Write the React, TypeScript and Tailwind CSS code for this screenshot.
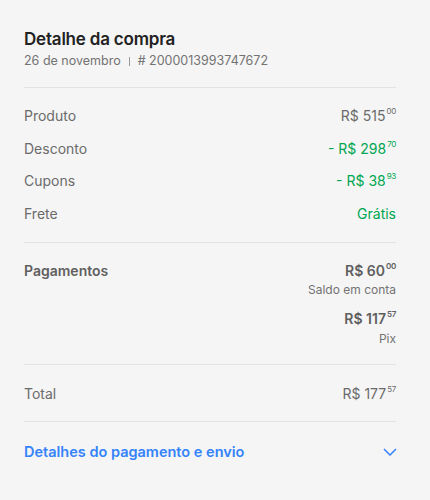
import React from 'react';

type Row = { label: string; value: React.ReactNode; green?: boolean };

const Price = ({ int, cents, prefix = '' }: { int: string; cents: string; prefix?: string }) => (
  <span className="whitespace-nowrap">
    {prefix}R$ {int}
    <sup className="relative top-[-1px] ml-px align-super text-[8px] tracking-[-0.3px]">{cents}</sup>
  </span>
);

const rows: Row[] = [
  { label: 'Produto', value: <Price int="515" cents="00" /> },
  { label: 'Desconto', value: <Price prefix="- " int="298" cents="70" />, green: true },
  { label: 'Cupons', value: <Price prefix="- " int="38" cents="93" />, green: true },
  { label: 'Frete', value: 'Grátis', green: true },
];

export default function App() {
  return (
    <div
      className="min-h-[500px] w-[430px] bg-[#f5f5f5] pl-6 pt-[28px]"
      style={{ fontFamily: 'Inter, "Open Sans", sans-serif' }}
    >
      <div className="w-[372px]">
        <h1 className="text-[17px] leading-[22px] font-semibold tracking-[-0.2px] text-[#222]">Detalhe da compra</h1>
        <p className="mt-[3px] flex items-center text-[12.5px] leading-4 text-[#737373]">
          26 de novembro
          <span className="mx-[8px] h-[9px] w-px bg-[#9a9a9a]" />
          # 2000013993747672
        </p>

        <div className="mt-[18px] h-px bg-[#e2e2e2]" />

        <div className="mt-[18px] flex flex-col gap-[12.5px]">
          {rows.map(r => (
            <div key={r.label} className="flex h-5 items-center justify-between text-[14px] leading-5">
              <span className="text-[#6b6b6b]">{r.label}</span>
              <span className={r.green ? 'text-[#00a650]' : 'text-[#6b6b6b]'}>{r.value}</span>
            </div>
          ))}
        </div>

        <div className="mt-[18px] h-px bg-[#e2e2e2]" />

        <div className="mt-[18px] flex justify-between">
          <span className="text-[14px] leading-5 font-semibold text-[#5f5f5f]">Pagamentos</span>
          <div className="flex flex-col items-end text-[#5f5f5f]">
            <span className="text-[14px] leading-5 font-semibold">
              <Price int="60" cents="00" />
            </span>
            <span className="mt-px text-[12px] leading-4 text-[#737373]">Saldo em conta</span>
            <span className="mt-[11px] text-[14px] leading-5 font-semibold">
              <Price int="117" cents="57" />
            </span>
            <span className="mt-[2px] text-[12px] leading-4 text-[#737373]">Pix</span>
          </div>
        </div>

        <div className="mt-[17px] h-px bg-[#e2e2e2]" />

        <div className="mt-[19px] flex h-5 items-center justify-between text-[14px] leading-5 text-[#6b6b6b]">
          <span>Total</span>
          <Price int="177" cents="57" />
        </div>

        <div className="mt-[17px] h-px bg-[#e2e2e2]" />

        <button className="mt-5 flex h-5 w-full items-center justify-between text-[14.5px] leading-5 font-semibold text-[#3483fa]">
          <span>Detalhes do pagamento e envio</span>
          <svg width="14" height="8" viewBox="0 0 14 8" className="mr-[-1px]">
            <path d="M1 1l6 6 6-6" fill="none" stroke="#3483fa" strokeWidth="1.5" />
          </svg>
        </button>
      </div>
    </div>
  );
}
